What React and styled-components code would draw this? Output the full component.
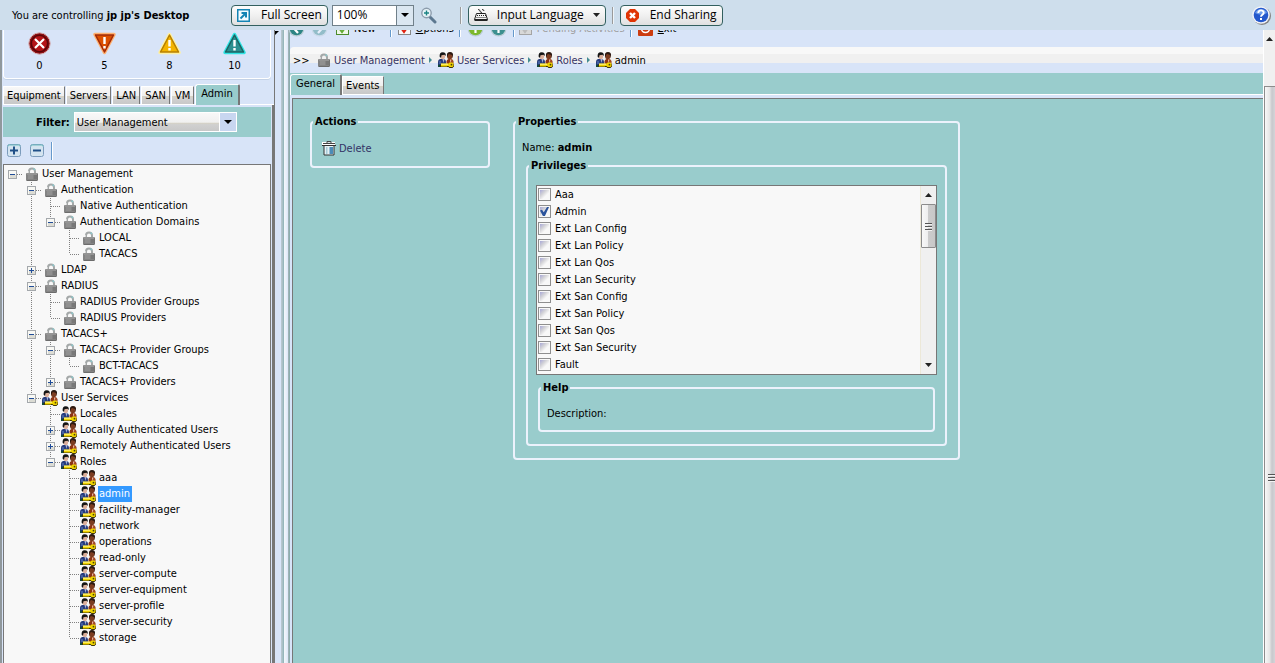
import { useState } from "react";
import styled, { createGlobalStyle, css } from "styled-components";

const teal = "#99cccc";
const lavender = "#d8e4f8";
const dark = "#777777";
const link = "#333366";

const GlobalStyle = createGlobalStyle`
  * {
    box-sizing: border-box;
  }
  body {
    margin: 0;
    overflow: hidden;
    background: ${lavender};
    color: #000;
    font: 11px/15px "DejaVu Sans Condensed", "DejaVu Sans", sans-serif;
  }
  button, select, input {
    font: inherit;
    color: inherit;
    margin: 0;
  }
  svg {
    display: block;
    flex: none;
  }
`;

/* glossy two-step fill used by tabs and drop-downs */
const glossy = css`
  background: linear-gradient(
    #f8f8f8 0,
    #efefef 50%,
    #d6d2c4 55%,
    #d0d0d0 68%,
    #c8c8c8 100%
  );
`;

const Page = styled.div`
  display: flex;
  flex-direction: column;
  height: 100vh;
`;

/* ---------- sharing bar ---------- */

const ShareBar = styled.header`
  position: relative;
  z-index: 1;
  display: flex;
  align-items: center;
  flex: none;
  height: 30px;
  padding: 0 4px 0 12px;
  background: #cedeec;
`;

const ShareText = styled.p`
  margin: 0;
  width: 219px;
  white-space: nowrap;
`;

const ShareButton = styled.button`
  display: flex;
  align-items: center;
  gap: ${(p) => p.$gap || 11}px;
  height: 21px;
  padding: 0 5px;
  border: 1px solid #33605f;
  border-radius: 4px;
  background: linear-gradient(#fdfdfd, #f0f0f0 50%, #e0e0e0);
  font: 12px/18px "Open Sans", "Noto Sans", sans-serif;
  white-space: nowrap;
`;

const ShareDivider = styled.span`
  width: 2px;
  height: 17px;
  margin: 0 6px 0 ${(p) => p.$left || 6}px;
  border-left: 1px solid #9a9a9a;
  border-right: 1px solid #eef4f8;
`;

const ZoomBox = styled.div`
  position: relative;
  width: 82px;
  height: 21px;
  margin: 0 6px 0 4px;
`;

const ZoomSelect = styled.select`
  appearance: none;
  width: 100%;
  height: 100%;
  padding: 0 0 0 4px;
  border: 1px solid #70808a;
  border-radius: 0;
  background: linear-gradient(to right, #fff 63px, #70808a 63px, #70808a 64px, #dbe7f1 64px);
  font: 12px/18px "Open Sans", "Noto Sans", sans-serif;
`;

const SelectArrow = styled.svg`
  position: absolute;
  right: 5px;
  top: 50%;
  margin-top: -2px;
  pointer-events: none;
`;

const IconButton = styled.button`
  display: flex;
  padding: 0;
  border: 0;
  background: none;
  margin-left: ${(p) => (p.$end ? "auto" : "0")};
`;

/* ---------- frame ---------- */

const Main = styled.div`
  display: flex;
  flex: 1;
  min-height: 0;
`;

const Side = styled.aside`
  display: flex;
  flex-direction: column;
  flex: none;
  width: 275px;
  border-left: 2px solid #90989c;
  border-right: 1px solid ${dark};
  padding-left: 1px;
`;

const Splitter = styled.div`
  flex: none;
  width: 15px;
  padding-top: 1px;
  background: linear-gradient(
    to right,
    ${lavender} 6px,
    #bccad2 6px,
    #a4bcc2 8px,
    #86b2b4 9px,
    #f4f8fc 9px,
    #e4ecf8 12px,
    ${lavender} 13px,
    #a8b4b8 13px,
    #82acac 15px
  );
`;

const Faults = styled.div`
  display: flex;
  height: 49px;
  padding: 2px 0 0 3px;
  margin-right: 3px;
  border: 1px solid #fff;
  border-top: 0;
  border-radius: 0 0 4px 4px;
  box-shadow: 0 1px 0 #c4d2e6;
`;

const Fault = styled.div`
  display: flex;
  flex-direction: column;
  align-items: center;
  gap: 3px;
  width: 65px;
`;

const TabList = styled.div`
  display: flex;
  align-items: flex-end;
  gap: ${(p) => p.$gap || 0}px;
  padding: ${(p) => p.$pad};
  background: ${(p) => p.$bg || "none"};
  border-bottom: 1px solid #fff;
`;

const Tab = styled.button`
  height: ${(p) => (p.$active ? 21 : 18)}px;
  padding: ${(p) => (p.$active ? "0 5px 3px" : "0 3px")};
  border: 1px solid #fff;
  border-right: ${(p) => (p.$active ? 2 : 1)}px solid ${dark};
  border-bottom: 0;
  ${glossy}
  ${(p) => p.$active && `background: ${teal}; border-radius: 3px 2px 0 0; margin-bottom: -1px;`}
  line-height: 15px;
  white-space: nowrap;
`;

const SideBody = styled.div`
  display: flex;
  flex-direction: column;
  flex: 1;
  min-height: 0;
  padding-top: 2px;
  border-right: 2px solid ${dark};
`;

const FilterRow = styled.div`
  display: flex;
  align-items: center;
  gap: 4px;
  height: 30px;
  padding-left: 33px;
  margin-right: 1px;
  background: ${teal};
`;

const FilterLabel = styled.label`
  font-weight: bold;
`;

const FilterBox = styled.div`
  position: relative;
  width: 163px;
  height: 20px;
`;

const FilterSelect = styled.select`
  appearance: none;
  width: 100%;
  height: 100%;
  padding: 0 0 0 2px;
  border: 1px solid #fff;
  border-radius: 0;
  background:
    linear-gradient(#fff, #fff) right 16px top / 1px 100% no-repeat,
    linear-gradient(#c8d6f0, #c8d6f0) right top / 16px 100% no-repeat,
    linear-gradient(#f8f8f8 0, #f0f0f0 52%, #d6d2c4 55%, #d0d0d0 65%, #c8c8c8 100%);
`;

const TreeTools = styled.div`
  display: flex;
  align-items: center;
  gap: 9px;
  height: 27px;
  padding-left: 4px;
`;

const ToolDivider = styled.span`
  width: 2px;
  height: 18px;
  margin-left: ${(p) => p.$left || 0}px;
  border-left: 1px solid #6699cc;
  border-right: 1px solid #fff;
`;

/* ---------- tree ---------- */

const Tree = styled.ul`
  flex: 1;
  margin: 0 1px 0 0;
  padding: 1px 0 0;
  list-style: none;
  overflow: hidden;
  background: #f8f8f8;
  border: 1px solid ${dark};
  border-bottom: 0;
`;

const TreeRow = styled.li`
  display: flex;
  align-items: center;
  height: 16px;
  white-space: nowrap;
`;

const TreeIcon = styled.span`
  display: flex;
  justify-content: ${(p) => (p.$lock ? "center" : "flex-start")};
  width: 18px;
`;

const TreeLabel = styled.span`
  padding: 0 2px 0 1px;
  line-height: 16px;
  ${(p) => p.$selected && "background: #3399ff; color: #fff;"}
`;

/* ---------- right side ---------- */

const Content = styled.main`
  display: flex;
  flex-direction: column;
  flex: 1;
  min-width: 0;
`;

/* the upper part of the toolbar slides under the sharing bar */
const Toolbar = styled.div`
  display: flex;
  align-items: center;
  flex: none;
  height: 38px;
  margin-top: -21px;
`;

const ToolItem = styled.button`
  display: flex;
  align-items: center;
  gap: 5px;
  padding: 0;
  margin-left: ${(p) => p.$left || 6}px;
  border: 0;
  background: none;
  white-space: nowrap;
  color: ${(p) => (p.disabled ? "#a0a0a0" : "#000")};
`;

const Crumbs = styled.nav`
  display: flex;
  align-items: center;
  flex: none;
  height: 26px;
  padding-left: 3px;
  border-radius: 4px 0 0 0;
  background: linear-gradient(#f8f8f8 7px, #f0f0f0 7px, #f0f0f0 16px, ${lavender} 16px);
`;

const Chevrons = styled.span`
  width: 24px;
`;

const Crumb = styled.a`
  display: flex;
  align-items: center;
  gap: 3px;
  color: ${(p) => (p.$current ? "#000" : link)};
  text-decoration: none;
`;

const CrumbArrow = styled.svg`
  margin: 0 5px 0 1px;
`;

const Panel = styled.section`
  display: flex;
  align-items: flex-start;
  gap: 23px;
  flex: 1;
  margin: 3px 0 0 2px;
  padding: 15px 17px;
  border: 1px solid ${dark};
  border-width: 1px 0 0 1px;
  background: ${teal};
`;

const Group = styled.fieldset`
  min-width: 0;
  margin: ${(p) => p.$margin || "0"};
  padding: 0 1px;
  flex: ${(p) => p.$flex || "none"};
  border: 2px solid #ecf2fc;
  border-radius: 4px;
`;

const GroupBody = styled.div`
  padding: ${(p) => p.$pad};
`;

const Legend = styled.legend`
  padding: 0 2px;
  font-weight: bold;
  line-height: 15px;
`;

const ActionLink = styled.a`
  display: flex;
  align-items: center;
  gap: 2px;
  color: ${link};
  text-decoration: none;
`;

const NameLine = styled.p`
  margin: 0;
  line-height: 16px;
`;

const ListBox = styled.div`
  display: flex;
  height: 190px;
  border: 1px solid ${dark};
  background: #f8f8f8;
`;

const CheckList = styled.div`
  flex: 1;
  overflow: hidden;
`;

const CheckRow = styled.label`
  display: flex;
  align-items: center;
  gap: 4px;
  height: 17px;
  padding-left: 1px;
`;

const Check = styled.input`
  appearance: none;
  width: 13px;
  height: 13px;
  padding: 1px;
  border: 1px solid #8e8e8e;
  background: linear-gradient(135deg, #a8a8d8 0, #d2d2d6 35%, #f8f8f8 65%) content-box #f4f4f4;
  &:checked::before {
    content: "";
    display: block;
    width: 9px;
    height: 9px;
    background: #2c549c;
    clip-path: polygon(0 38%, 22% 30%, 42% 58%, 78% 0, 100% 0, 55% 100%, 32% 100%);
  }
`;

const ScrollTrack = styled.div`
  display: flex;
  flex-direction: column;
  width: ${(p) => p.$width}px;
  border-left: 1px solid ${(p) => p.$edge};
  background: #f0f0f0;
`;

const ScrollArrow = styled.div`
  display: flex;
  justify-content: center;
  align-items: ${(p) => p.$align || "center"};
  flex: none;
  height: ${(p) => p.$height}px;
  padding-top: ${(p) => p.$top || 0}px;
  margin-top: ${(p) => (p.$last ? "auto" : "0")};
`;

const ScrollThumb = styled.div`
  display: flex;
  justify-content: center;
  align-items: center;
  height: 44px;
  border: 1px solid #8c8c8c;
  border-radius: 1px;
  background: linear-gradient(to right, #f8f8f8 0, #eee 48%, #ccc 50%, #c8c8c8 100%);
`;

const PageThumb = styled.div`
  display: flex;
  justify-content: flex-end;
  align-items: center;
  flex: 1;
  padding-top: 204px;
  border: 1px solid #8c8c8c;
  border-width: 1px 0 0 1px;
  background: linear-gradient(to right, #f8f8f8, #e6e6e6 45%, #c8c8cc 70%, #d4d4d8);
`;

/* ---------- icons ---------- */

const Caret = ({ up }) => (
  <svg width="7" height="4" viewBox="0 0 7 4">
    <path d={up ? "M0 4L3.5 0L7 4z" : "M0 0h7L3.5 4z"} fill="#222" />
  </svg>
);

const Grip = () => (
  <svg width="7" height="9" viewBox="0 0 7 9" shapeRendering="crispEdges">
    <path d="M0 1h7M0 4h7M0 7h7" stroke="#555" />
    <path d="M0 2h7M0 5h7M0 8h7" stroke="#f4f4f4" />
  </svg>
);

const LockIcon = () => (
  <svg width="14" height="15" viewBox="0 0 14 15">
    <path d="M4 7V4.5C4 2.5 5 1.5 7 1.5s3 1 3 3V7" fill="none" stroke="#a4a8a8" strokeWidth="2" />
    <path d="M3.5 6V4" stroke="#d4d4d4" />
    <path d="M8.5 1.6L10 3" stroke="#8cc8cc" strokeWidth="1.4" />
    <rect x="1" y="6" width="12" height="8" rx="1" fill="#848484" />
    <path d="M2 7h10" stroke="#a4a4a4" />
    <path d="M3 9h5M3 11h5" stroke="#9c9c9c" />
    <path d="M9 9h3M9 11h3M2 13.5h10" stroke="#6c6c6c" />
    <path d="M12.5 7v6" stroke="#747474" />
  </svg>
);

const UsersIcon = () => (
  <svg width="16" height="16" viewBox="0 0 16 16">
    <path d="M8.5 15V9.5q0-2 2-2.5h3q2 .5 2 2.500V15z" fill="#8c3414" />
    <path d="M12 7.5h1.5l-1 4z" fill="#f4c4b0" />
    <path d="M14 8v4" stroke="#b45c34" />
    <ellipse cx="11.8" cy="4" rx="2.8" ry="3.3" fill="#7c3c20" />
    <path d="M9 4q-.5-4 3-4t3 4v2l-1-3-3-1-1 1v2z" fill="#2c1810" />
    <path d="M0 15V9.5Q0 7.5 2 7h4q2 .5 2 2.500V15z" fill="#283c7c" />
    <path d="M2 9v3" stroke="#4c6cac" strokeWidth="1.5" />
    <path d="M4.5 7h2l-1 4z" fill="#a4b4dc" />
    <path d="M0 12.5l2 .5v2H0z" fill="#10483c" />
    <ellipse cx="4.8" cy="4.5" rx="2.3" ry="2.8" fill="#dcb09c" />
    <path d="M1.700 5Q1 .2 4.700.2T7.700 4L6.500 2.800 3.500 3.200 3 5.800z" fill="#141414" />
    <path d="M2 12.5h8.500l1-1h3L16 12.5v1.700L14.500 16h-3l-1-1H2z" fill="#3c3408" />
    <path d="M3 11.5h7.500l1-1h3l1 1.200v2L14.500 15h-3l-1-1H9l-1 1-1-1-1 1-1-1-1 1-1-1z" fill="#f0d400" />
    <path d="M3 12.2h7" stroke="#fff890" />
    <circle cx="13.5" cy="12.7" r="0.9" fill="#4c4408" />
  </svg>
);

const Guide = ({ kind, toggle, root }) => (
  <svg width="19" height="16" viewBox="0 0 19 16" shapeRendering="crispEdges">
    <g stroke="#808080" strokeDasharray="1 1">
      {!root && kind !== "none" && <path d={kind === "end" ? "M8.5 0V8" : "M8.5 0V16"} />}
      {(kind === "tee" || kind === "end") && <path d="M9 8.5H19" />}
    </g>
    {toggle && (
      <g>
        <rect x="4" y="4" width="9" height="9" fill="#a4a8ac" />
        <rect x="5" y="5" width="7" height="7" fill="#f8f8f4" />
        <rect x="6" y="9" width="6" height="3" fill="#dcdcd4" />
        <path d="M6 8.5h5" stroke="#204c98" />
        {toggle === "+" && <path d="M8.5 6v5" stroke="#204c98" />}
      </g>
    )}
  </svg>
);

const ExpandIcon = ({ plus }) => (
  <svg width="14" height="13" viewBox="0 0 14 13">
    <rect x="0.5" y="0.5" width="13" height="12" rx="2" fill="#d4e4f0" stroke="#7c9cbc" />
    <path d="M1 2.5V2q0-1 1-1h10q1 0 1 1v.5" fill="none" stroke="#70bcc0" />
    <path d="M3 6.5h8" stroke="#205088" strokeWidth="2" />
    {plus && <path d="M7 2.5v8" stroke="#205088" strokeWidth="2" />}
  </svg>
);

const CriticalIcon = () => (
  <svg width="23" height="23" viewBox="0 0 23 23">
    <circle cx="11.5" cy="11.5" r="10.7" fill="#8c1014" stroke="#d8b4b8" />
    <circle cx="11.5" cy="11.5" r="8.2" fill="#b41418" stroke="#5c0408" strokeWidth="1.6" />
    <path d="M7 7l9 9M16 7l-9 9" stroke="#fff" strokeWidth="2.2" />
  </svg>
);

const TriangleIcon = ({ down, fill, edge, glow }) => (
  <svg width="23" height="23" viewBox="0 0 23 23">
    <g transform={down ? "rotate(180 11.5 11.5)" : undefined} strokeLinejoin="round">
      <path d="M11.5 2.5L21 20.5H2z" fill={glow} stroke={glow} strokeWidth="3.5" />
      <path d="M11.5 3L20.5 20H2.5z" fill={fill} stroke={edge} strokeWidth="1.6" />
    </g>
    <path
      d={down ? "M11.5 5v7M11.5 14v2.5" : "M11.5 8v6.5M11.5 16v2.5"}
      stroke="#fff"
      strokeWidth="2.4"
    />
  </svg>
);

const FullScreenIcon = () => (
  <svg width="13" height="13" viewBox="0 0 13 13">
    <rect width="13" height="13" fill="#1484b4" />
    <rect x="1.5" y="1.5" width="10" height="10" fill="#f4fcff" />
    <path d="M3.5 9.5L8 5" stroke="#1484b4" strokeWidth="2" />
    <path d="M4.5 3H10v5.5H8V5H4.5z" fill="#1484b4" />
  </svg>
);

const MagnifierIcon = () => (
  <svg width="17" height="17" viewBox="0 0 17 17">
    <path d="M9 9l6 6" stroke="#5c7890" strokeWidth="3" strokeLinecap="round" />
    <circle cx="6.5" cy="6" r="4.7" fill="#e8f4f8" stroke="#8c9cac" strokeWidth="1.4" />
    <path d="M4 6h5M6.5 3.5v5" stroke="#1c8484" strokeWidth="1.4" />
  </svg>
);

const KeyboardIcon = () => (
  <svg width="14" height="12" viewBox="0 0 14 12">
    <path d="M4 .5q2 0 2 1.500t2 1.500M8 .5q2 0 2 1.500" fill="none" stroke="#333" />
    <path d="M2.5 4.5h9l2 6H.5z" fill="#f4f4f4" stroke="#222" />
    <path d="M3 6.5h9M2.5 8.5h10" stroke="#222" strokeDasharray="1 1" />
    <path d="M.5 11h13" stroke="#222" strokeWidth="2" />
  </svg>
);

const EndIcon = () => (
  <svg width="13" height="13" viewBox="0 0 13 13">
    <path d="M4 0h5l4 4v5l-4 4H4L0 9V4z" fill="#e03404" />
    <path d="M4 4l5 5M9 4L4 9" stroke="#fff" strokeWidth="2.4" />
  </svg>
);

const HelpIcon = () => (
  <svg width="19" height="19" viewBox="0 0 19 19">
    <circle cx="10" cy="10" r="9" fill="#848484" />
    <circle cx="9" cy="9" r="8.8" fill="#f0f2f8" />
    <circle cx="9" cy="9" r="7.3" fill="#2458cc" />
    <path d="M3 7a6.5 6.5 0 0 1 12 0q-6 3-12 0" fill="#6c9cec" />
    <path
      d="M6.3 7c0-3.500 5.400-3.500 5.400-.3 0 2-2.700 2-2.700 4"
      fill="none"
      stroke="#fff"
      strokeWidth="1.9"
    />
    <rect x="8" y="12" width="2" height="2" fill="#fff" />
  </svg>
);

const RoundIcon = ({ fill, faded, d }) => (
  <svg width="17" height="17" viewBox="0 0 17 17" opacity={faded ? 0.4 : 1}>
    <circle cx="8.5" cy="8.5" r="8" fill="#b8ccd4" />
    <circle cx="8.5" cy="8.5" r="6.8" fill={fill} />
    <path d={d} fill="none" stroke="#fff" strokeWidth="2.2" />
  </svg>
);

const SquareIcon = ({ fill, edge, mark }) => (
  <svg width="13" height="13" viewBox="0 0 13 13">
    <rect x="0.5" y="0.5" width="12" height="12" fill={fill} stroke={edge} />
    <path d="M3 6l3 4 5-7" fill="none" stroke={mark} strokeWidth="2" />
  </svg>
);

const ExitIcon = () => (
  <svg width="15" height="15" viewBox="0 0 15 15">
    <rect width="15" height="15" rx="1" fill="#cc3c10" />
    <circle cx="7.5" cy="7.5" r="4" fill="none" stroke="#fff" strokeWidth="1.6" />
    <path d="M7.5 2v6" stroke="#fff" strokeWidth="1.6" />
  </svg>
);

const TrashIcon = () => (
  <svg width="16" height="16" viewBox="0 0 16 16">
    <path d="M1 2h13v3H1z" fill="#fff" />
    <path d="M2 3.5h12M6 1.5h4v2H6z" fill="#d8e4e8" stroke="#444" />
    <path d="M3 5.5h10V15H3z" fill="#e4f0f4" stroke="#333" />
    <path d="M1 5.5h14" stroke="#333" />
    <path d="M8.5 7H12v7H8.5z" fill="#4c8cb8" />
    <path d="M5 7h1.5v7H5z" fill="#a8ccd8" />
  </svg>
);

/* ---------- data ---------- */

const faults = [
  { count: 0, icon: <CriticalIcon /> },
  { count: 5, icon: <TriangleIcon down fill="#dc5000" edge="#a42c08" glow="#ffb070" /> },
  { count: 8, icon: <TriangleIcon fill="#f4b400" edge="#b88000" glow="#fff0a0" /> },
  { count: 10, icon: <TriangleIcon fill="#2c9090" edge="#1c6464" glow="#30e4e4" /> },
];

const tree = {
  label: "User Management",
  children: [
    {
      label: "Authentication",
      children: [
        { label: "Native Authentication" },
        {
          label: "Authentication Domains",
          children: [{ label: "LOCAL" }, { label: "TACACS" }],
        },
      ],
    },
    { label: "LDAP", closed: true },
    {
      label: "RADIUS",
      children: [{ label: "RADIUS Provider Groups" }, { label: "RADIUS Providers" }],
    },
    {
      label: "TACACS+",
      children: [
        { label: "TACACS+ Provider Groups", children: [{ label: "BCT-TACACS" }] },
        { label: "TACACS+ Providers", closed: true },
      ],
    },
    {
      label: "User Services",
      users: true,
      children: [
        { label: "Locales", users: true },
        { label: "Locally Authenticated Users", users: true, closed: true },
        { label: "Remotely Authenticated Users", users: true, closed: true },
        {
          label: "Roles",
          users: true,
          children: [
            "aaa",
            "admin",
            "facility-manager",
            "network",
            "operations",
            "read-only",
            "server-compute",
            "server-equipment",
            "server-profile",
            "server-security",
            "storage",
          ].map((label) => ({ label, users: true })),
        },
      ],
    },
  ],
};

const privileges = [
  "Aaa",
  "Admin",
  "Ext Lan Config",
  "Ext Lan Policy",
  "Ext Lan Qos",
  "Ext Lan Security",
  "Ext San Config",
  "Ext San Policy",
  "Ext San Qos",
  "Ext San Security",
  "Fault",
];

const TreeNode = ({ node, guides = [], last = true, selected, onSelect }) => {
  const root = !guides.length;
  const toggle = node.closed ? "+" : node.children ? "-" : null;
  const next = [...guides, last ? "none" : "line"];
  return (
    <>
      <TreeRow onClick={() => onSelect(node.label)}>
        {guides.map((kind, i) => (
          <Guide key={i} kind={kind} />
        ))}
        <Guide root={root} kind={last ? "end" : "tee"} toggle={toggle} />
        <TreeIcon $lock={!node.users}>{node.users ? <UsersIcon /> : <LockIcon />}</TreeIcon>
        <TreeLabel $selected={selected === node.label}>{node.label}</TreeLabel>
      </TreeRow>
      {node.children?.map((child, i) => (
        <TreeNode
          key={child.label}
          node={child}
          guides={next}
          last={i === node.children.length - 1}
          selected={selected}
          onSelect={onSelect}
        />
      ))}
    </>
  );
};

const Sidebar = () => {
  const [selected, setSelected] = useState("admin");
  return (
    <Side>
      <Faults>
        {faults.map((fault) => (
          <Fault key={fault.count}>
            {fault.icon}
            <span>{fault.count}</span>
          </Fault>
        ))}
      </Faults>
      <TabList $gap={1} $pad="5px 0 0">
        {["Equipment", "Servers", "LAN", "SAN", "VM", "Admin"].map((name) => (
          <Tab key={name} $active={name === "Admin"}>
            {name}
          </Tab>
        ))}
      </TabList>
      <SideBody>
        <FilterRow>
          <FilterLabel htmlFor="filter">Filter:</FilterLabel>
          <FilterBox>
            <FilterSelect id="filter">
              <option>User Management</option>
            </FilterSelect>
            <SelectArrow width="8" height="4" viewBox="0 0 8 4">
              <path d="M0 0h8L4 4z" />
            </SelectArrow>
          </FilterBox>
        </FilterRow>
        <TreeTools>
          <IconButton aria-label="Expand">
            <ExpandIcon plus />
          </IconButton>
          <IconButton aria-label="Collapse">
            <ExpandIcon />
          </IconButton>
          <ToolDivider $left={-2} />
        </TreeTools>
        <Tree>
          <TreeNode node={tree} selected={selected} onSelect={setSelected} />
        </Tree>
      </SideBody>
    </Side>
  );
};

const Privileges = () => {
  const [checked, setChecked] = useState(["Admin"]);
  const toggle = (name) =>
    setChecked(checked.includes(name) ? checked.filter((c) => c !== name) : [...checked, name]);
  return (
    <Group $margin="2px 0 0 4px">
      <Legend>Privileges</Legend>
      <GroupBody $pad="12px 7px 12px">
        <ListBox>
          <CheckList>
            {privileges.map((name) => (
              <CheckRow key={name}>
                <Check
                  type="checkbox"
                  checked={checked.includes(name)}
                  onChange={() => toggle(name)}
                />
                {name}
              </CheckRow>
            ))}
          </CheckList>
          <ScrollTrack $width={16} $edge="#ece8d8">
            <ScrollArrow $height={18}>
              <Caret up />
            </ScrollArrow>
            <ScrollThumb>
              <Grip />
            </ScrollThumb>
            <ScrollArrow $height={18} $last>
              <Caret />
            </ScrollArrow>
          </ScrollTrack>
        </ListBox>
        <Group $margin="5px 2px 0">
          <Legend>Help</Legend>
          <GroupBody $pad="11px 6px 9px">Description:</GroupBody>
        </Group>
      </GroupBody>
    </Group>
  );
};

const App = () => {
  const crumbs = ["User Management", "User Services", "Roles", "admin"];
  return (
    <Page>
      <GlobalStyle />
      <ShareBar>
        <ShareText>
          You are controlling <b>jp jp's Desktop</b>
        </ShareText>
        <ShareButton>
          <FullScreenIcon />
          Full Screen
        </ShareButton>
        <ZoomBox>
          <ZoomSelect aria-label="Zoom">
            <option>100%</option>
          </ZoomSelect>
          <SelectArrow width="8" height="4" viewBox="0 0 8 4">
            <path d="M0 0h8L4 4z" />
          </SelectArrow>
        </ZoomBox>
        <IconButton aria-label="Zoom in">
          <MagnifierIcon />
        </IconButton>
        <ShareDivider $left={23} />
        <ShareButton $gap={9}>
          <KeyboardIcon />
          Input Language
          <Caret />
        </ShareButton>
        <ShareDivider />
        <ShareButton>
          <EndIcon />
          End Sharing
        </ShareButton>
        <IconButton $end aria-label="Help">
          <HelpIcon />
        </IconButton>
      </ShareBar>
      <Main>
        <Sidebar />
        <Splitter>
          <svg width="5" height="6" viewBox="0 0 5 6">
            <path d="M0 0h4L0 4z" />
          </svg>
        </Splitter>
        <Content>
          <Toolbar>
            <ToolItem $left={-2} aria-label="Back">
              <RoundIcon fill="#2c8484" d="M10 4L6 8.5 10 13" />
            </ToolItem>
            <ToolItem aria-label="Forward">
              <RoundIcon faded fill="#2c8484" d="M7 4l4 4.5L7 13" />
            </ToolItem>
            <ToolItem $left={8}>
              <SquareIcon fill="#f0f8e8" edge="#4c8c2c" mark="#64ac34" />
              New
            </ToolItem>
            <ToolDivider $left={14} />
            <ToolItem>
              <SquareIcon fill="#f8f8f8" edge="#888" mark="#e02010" />
              <span>
                <u>O</u>ptions
              </span>
            </ToolItem>
            <ToolDivider $left={5} />
            <ToolItem aria-label="Help topics">
              <RoundIcon fill="#7cb82c" d="M6 6q0-2 2.500-2T11 6.500 8.500 9v4" />
            </ToolItem>
            <ToolItem aria-label="About">
              <RoundIcon fill="#3c9090" d="M8.500 3v2M8.500 7v6" />
            </ToolItem>
            <ToolDivider $left={6} />
            <ToolItem disabled $left={4}>
              <SquareIcon fill="#d8d8d8" edge="#a4a4a4" mark="#bcbcbc" />
              Pending Activities
            </ToolItem>
            <ToolDivider $left={5} />
            <ToolItem>
              <ExitIcon />
              <span>
                <u>E</u>xit
              </span>
            </ToolItem>
          </Toolbar>
          <Crumbs>
            <Chevrons>&gt;&gt;</Chevrons>
            {crumbs.map((name, i) => (
              <Crumb key={name} href="#" $current={i === 3}>
                {i === 0 ? <LockIcon /> : <UsersIcon />}
                {name}
                {i < 3 && (
                  <CrumbArrow width="4" height="6" viewBox="0 0 4 6">
                    <path d="M0 0l3 3-3 3z" fill="#448c94" />
                  </CrumbArrow>
                )}
              </Crumb>
            ))}
          </Crumbs>
          <TabList $pad="1px 0 0" $bg={teal}>
            <Tab $active>General</Tab>
            <Tab>Events</Tab>
          </TabList>
          <Panel>
            <Group $flex="0 1 180px">
              <Legend>Actions</Legend>
              <GroupBody $pad="11px 8px 10px">
                <ActionLink href="#">
                  <TrashIcon />
                  Delete
                </ActionLink>
              </GroupBody>
            </Group>
            <Group $flex="0 1 447px">
              <Legend>Properties</Legend>
              <GroupBody $pad="11px 10px 12px 6px">
                <NameLine>
                  Name: <b>admin</b>
                </NameLine>
                <Privileges />
              </GroupBody>
            </Group>
          </Panel>
        </Content>
        <ScrollTrack $width={12} $edge="#fff">
          <ScrollArrow $height={56} $align="flex-start" $top={7}>
            <Caret up />
          </ScrollArrow>
          <PageThumb>
            <Grip />
          </PageThumb>
        </ScrollTrack>
      </Main>
    </Page>
  );
};

export default App;
